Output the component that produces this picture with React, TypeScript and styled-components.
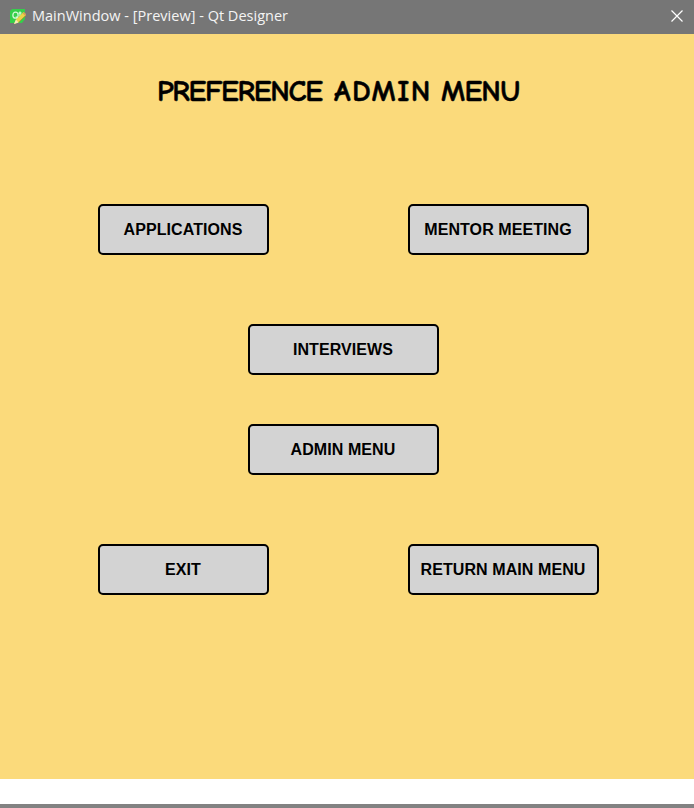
import React from "react";
import styled, { createGlobalStyle } from "styled-components";

const GlobalStyle = createGlobalStyle`
  html, body { margin: 0; padding: 0; background: #fff; }
  * { box-sizing: border-box; }
`;

const Window = styled.div`
  width: 694px;
  height: 808px;
  display: flex;
  flex-direction: column;
  background: #fff;
  overflow: hidden;
`;

const TitleBar = styled.header`
  height: 34px;
  flex: none;
  display: flex;
  align-items: center;
  padding: 0 10px 2px 9px;
  background: #767676;
  color: #f4f4f4;
`;

const WindowTitle = styled.span`
  flex: 1;
  margin-left: 6px;
  font: 400 14.5px/20px "Open Sans", "Noto Sans", sans-serif;
  letter-spacing: 0.01px;
  white-space: pre;
`;

const CloseButton = styled.button`
  width: 14px;
  height: 14px;
  padding: 0;
  border: 0;
  background: none;
  display: flex;
`;

const Content = styled.main`
  height: 745px;
  flex: none;
  background: #fbda7b;
  display: flex;
  flex-direction: column;
`;

const Heading = styled.h1`
  margin: 39px 0 0 157px;
  height: 37px;
  display: flex;
  gap: 12px;
  font: 700 30px/37px "Comic Sans MS", "Comic Neue", "Noto Sans", sans-serif;
  -webkit-text-stroke: 0.5px #000;
  color: #000;
`;

const Word = styled.span<{ $width: number; $spacing: number }>`
  width: ${(p) => p.$width}px;
  letter-spacing: ${(p) => p.$spacing}px;
  white-space: nowrap;
`;

const Row = styled.div<{ $top: number; $left: number }>`
  display: flex;
  margin-top: ${(p) => p.$top}px;
  padding-left: ${(p) => p.$left}px;
  gap: 139px;
`;

const MenuButton = styled.button<{ $width: number }>`
  width: ${(p) => p.$width}px;
  height: 51px;
  padding: 0 1px 0 0;
  border: 2px solid #000;
  border-radius: 5px;
  background: #d3d3d3;
  color: #000;
  font: bold 16px/20px "Liberation Sans", Arial, sans-serif;
  letter-spacing: 0.08px;
  white-space: nowrap;
`;

const Taskbar = styled.footer`
  height: 4px;
  margin-top: auto;
  background: #828282;
`;

const AppIcon = () => (
  <svg width="17" height="17" viewBox="0 0 17 17" fill="none">
    <path d="M3 1h13v10l-3 4H1V3z" fill="#35cf4b" />
    <path d="M6.500 4.200c-3.500 0-3.500 6 0 6s3.500-6 0-6M7 8.500l1.500 2.500M11 3.500V8M9.700 5h2.800" stroke="#d3f9d5" strokeWidth="1.300" />
    <path d="M5 16 7 11.500 14.500 4 17.500 6.800 9.500 14.500z" fill="#e9d548" />
    <path d="M5 16 7 11.500 9.500 14.500z" fill="#f4ebc0" />
    <path d="m9.500 14.300 7.500-7" stroke="#a98b36" strokeWidth=".8" />
    <path d="m13.500 5 1.200-1.100L17.300 6.600l-1.200 1.200z" fill="#d99b55" />
  </svg>
);

export default function App() {
  return (
    <>
      <GlobalStyle />
      <Window>
        <TitleBar>
          <AppIcon />
          <WindowTitle>MainWindow - [Preview] - Qt Designer</WindowTitle>
          <CloseButton aria-label="Close">
            <svg width="14" height="14" viewBox="0 0 14 14">
              <path d="M1.500 1.500 12.500 12.500M12.500 1.500 1.500 12.500" stroke="#fff" strokeWidth="1.200" />
            </svg>
          </CloseButton>
        </TitleBar>
        <Content>
          <Heading>
            <Word $width={165} $spacing={-1.3}>PREFERENCE</Word>
            <Word $width={95} $spacing={1.5}>ADMIN</Word>
            <Word $width={78} $spacing={-0.8}>MENU</Word>
          </Heading>
          <Row $top={94} $left={98}>
            <MenuButton $width={171}>APPLICATIONS</MenuButton>
            <MenuButton $width={181}>MENTOR MEETING</MenuButton>
          </Row>
          <Row $top={69} $left={248}>
            <MenuButton $width={191}>INTERVIEWS</MenuButton>
          </Row>
          <Row $top={49} $left={248}>
            <MenuButton $width={191}>ADMIN MENU</MenuButton>
          </Row>
          <Row $top={69} $left={98}>
            <MenuButton $width={171}>EXIT</MenuButton>
            <MenuButton $width={191}>RETURN MAIN MENU</MenuButton>
          </Row>
        </Content>
        <Taskbar />
      </Window>
    </>
  );
}
